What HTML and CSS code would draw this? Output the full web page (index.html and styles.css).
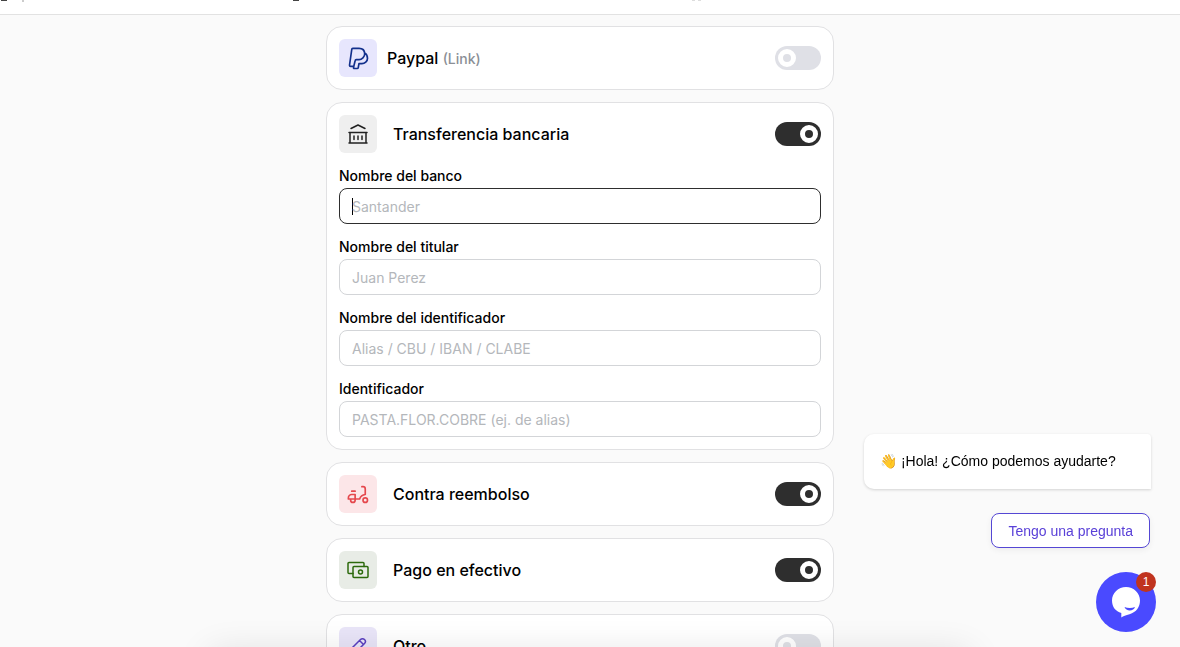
FILE: index.html
```html
<!DOCTYPE html>
<html lang="es">

<head>
  <meta charset="UTF-8">
  <meta name="viewport" content="width=device-width, initial-scale=1.0">
  <title>Métodos de pago</title>
  <link rel="stylesheet" href="styles.css">
</head>

<body>
  <header class="topbar">
    <span class="mark"></span>
    <span class="mark thin"></span>
    <span class="mark mid"></span>
    <span class="mark far"></span>
    <span class="mark far-end"></span>
  </header>

  <main class="methods">
    <section class="card">
      <div class="card-head">
        <span class="icon paypal">
          <svg width="27" height="27" viewBox="0 0 24 24">
            <path d="M10 13h2.500c2.500 0 5-2.500 5-5c0-3-1.900-5-5-5H7c-.5 0-1 .5-1 1L4 18c0 .5.5 1 1 1h2.800L9 14c.1-.6.4-1 1-1m7.500-5.800c1.700 1 2.500 2.800 2.500 4.800c0 2.500-2.500 4.500-5 4.500h-2.600l-.6 3.600a1 1 0 0 1-1 .8H8.100a.5.5 0 0 1-.5-.6l.2-1.400" />
          </svg>
        </span>
        <label class="name near" for="paypal">Paypal <small>(Link)</small></label>
        <input class="switch" type="checkbox" role="switch" id="paypal">
      </div>
    </section>

    <section class="card">
      <div class="card-head">
        <span class="icon bank">
          <svg width="22" height="22" viewBox="0 0 22 22">
            <path d="M4 5.500L11 2L18 5.500M2 9.500H20M2 20H20M3 9.500V20M19 9.500V20M7 13V16.500M11 13V16.500M15 13V16.500" />
          </svg>
        </span>
        <label class="name" for="transfer">Transferencia bancaria</label>
        <input class="switch" type="checkbox" role="switch" id="transfer" checked>
      </div>
      <div class="field">
        <label for="bank-name">Nombre del banco</label>
        <input type="text" id="bank-name" placeholder="Santander" autofocus>
      </div>
      <div class="field">
        <label for="holder">Nombre del titular</label>
        <input type="text" id="holder" placeholder="Juan Perez">
      </div>
      <div class="field">
        <label for="id-name">Nombre del identificador</label>
        <input type="text" id="id-name" placeholder="Alias / CBU / IBAN / CLABE">
      </div>
      <div class="field">
        <label for="id-value">Identificador</label>
        <input type="text" id="id-value" placeholder="PASTA.FLOR.COBRE (ej. de alias)">
      </div>
    </section>

    <section class="card">
      <div class="card-head">
        <span class="icon moped">
          <svg width="27" height="27" viewBox="0 0 24 24">
            <circle cx="18" cy="17" r="2" />
            <path d="M5 16v1a2 2 0 0 0 4 0v-5H6a3 3 0 0 0-3 3v1h10a6 6 0 0 1 5-4V7a2 2 0 0 0-2-2h-1M6 9h3" />
          </svg>
        </span>
        <label class="name" for="cod">Contra reembolso</label>
        <input class="switch" type="checkbox" role="switch" id="cod" checked>
      </div>
    </section>

    <section class="card">
      <div class="card-head">
        <span class="icon cash">
          <svg width="22" height="18" viewBox="0 0 22 18">
            <rect x="6" y="5.500" width="15" height="11" rx="1" />
            <path d="M17 5.500V2.500a1 1 0 0 0-1-1H2a1 1 0 0 0-1 1V11.500a1 1 0 0 0 1 1H6" />
            <circle cx="13.500" cy="11" r="2" />
          </svg>
        </span>
        <label class="name" for="cash">Pago en efectivo</label>
        <input class="switch" type="checkbox" role="switch" id="cash" checked>
      </div>
    </section>

    <section class="card">
      <div class="card-head">
        <span class="icon other">
          <svg width="24" height="24" viewBox="0 0 24 24">
            <path d="M4 20h4L18.500 9.500a2.800 2.800 0 1 0-4-4L4 16v4M13.500 6.500l4 4" />
          </svg>
        </span>
        <label class="name" for="other">Otro</label>
        <input class="switch" type="checkbox" role="switch" id="other">
      </div>
    </section>
  </main>

  <div class="bottom-bar"></div>

  <aside class="chat">
    <p class="bubble">👋 ¡Hola! ¿Cómo podemos ayudarte?</p>
    <button class="question" type="button">Tengo una pregunta</button>
    <button class="launcher" type="button" aria-label="Abrir chat">
      <svg width="28" height="32" viewBox="0 0 28 32">
        <path fill="#fff" d="M14 1C6.300 1 0 7 0 14.500c0 6.500 3.800 11 9.300 12.600V31.500c2-1.300 4.500-2 8.200-3.200C24.500 26 28 21 28 14.500C28 7 21.700 1 14 1z" />
        <path fill="#4a4aff" d="M12.500 21c3 1.200 7.500 1.200 10.500 0c-.6 2.200-2.800 3.600-5.200 3.600S13.200 23.200 12.500 21z" />
      </svg>
      <span class="badge">1</span>
    </button>
  </aside>
</body>

</html>
```
FILE: styles.css
```css
* {
  box-sizing: border-box;
}

html,
body {
  height: 100%;
  margin: 0;
}

body {
  overflow: hidden;
  background: #fafafa;
  color: #000;
  font-family: Inter, "Liberation Sans", sans-serif;
}

.topbar {
  display: flex;
  height: 15px;
  padding-left: 1px;
  background: #fff;
  border-bottom: 1px solid #e2e2e2;
}

.mark {
  width: 6px;
  height: 1px;
  background: #444;
}

.mark.thin {
  width: 2px;
  height: 2px;
  margin-left: 15px;
  background: #ccc;
}

.mark.mid {
  margin-left: 269px;
}

.mark.far {
  width: 3px;
  margin-left: 393px;
  background: #ddd;
}

.mark.far-end {
  width: 3px;
  margin-left: 3px;
  background: #ddd;
}

.methods {
  display: flex;
  flex-direction: column;
  gap: 12px;
  max-width: 528px;
  margin: 0 auto;
  padding: 11px 20px 12px 0;
}

.card {
  padding: 12px;
  background: #fff;
  border: 1px solid #e1e1e3;
  border-radius: 16px;
}

.card-head {
  display: flex;
  align-items: center;
}

.icon {
  display: flex;
  align-items: center;
  justify-content: center;
  width: 38px;
  height: 38px;
  border-radius: 6px;
}

.icon svg {
  fill: none;
  stroke: currentColor;
  stroke-width: 1.5;
  stroke-linecap: round;
  stroke-linejoin: round;
}

.icon.paypal {
  color: #12308c;
  background: #e7e6fd;
}

.icon.bank {
  color: #222;
  background: #efefef;
}

.icon.moped {
  color: #e5484d;
  background: #fce6e8;
}

.icon.cash {
  color: #2c6a0c;
  background: #e8ece6;
}

.icon.other {
  color: #5a3fc0;
  background: #e9e5f8;
}

.name {
  flex: 1;
  margin-left: 16px;
  font-size: 16px;
  font-weight: 500;
  line-height: 24px;
}

.name.near {
  margin-left: 10px;
}

.name small {
  color: #8b8f96;
  font-size: 14px;
}

.switch {
  appearance: none;
  display: flex;
  align-items: center;
  width: 46px;
  height: 24px;
  margin: 0;
  padding: 0 3px;
  border-radius: 12px;
  background: #dfe0e6;
  cursor: pointer;
}

.switch::before {
  content: "";
  box-sizing: border-box;
  width: 18px;
  height: 18px;
  border: 5px solid #fff;
  border-radius: 50%;
}

.switch:checked {
  justify-content: flex-end;
  background: #2e2e2e;
}

.field {
  display: flex;
  flex-direction: column;
  margin-top: 11px;
}

.field label {
  font-size: 14px;
  font-weight: 500;
  line-height: 24px;
}

.field input {
  width: 100%;
  height: 36px;
  padding: 0 12px;
  border: 1px solid #d3d5d8;
  border-radius: 8px;
  outline: none;
  background: #fff;
  font-family: inherit;
  font-size: 14px;
}

.field input::placeholder {
  color: #b4b7bb;
}

.field input:focus {
  border-color: #2e2e2e;
  background: linear-gradient(#000, #000) 12px 9px / 1px 17px no-repeat #fff;
  caret-color: transparent;
}

/* sits under the window edge, only its shadow shows */
.bottom-bar {
  position: fixed;
  right: 210px;
  bottom: -36px;
  left: 210px;
  height: 30px;
  box-shadow: 0 0 36px rgba(0, 0, 0, 0.12);
}

.chat {
  position: fixed;
  right: 24px;
  bottom: 15px;
  display: flex;
  flex-direction: column;
  align-items: flex-end;
  gap: 24px;
  font-family: "Liberation Sans", Arial, sans-serif;
}

.bubble {
  width: 287px;
  margin: 0 5px 0 0;
  padding: 18px 16px;
  border-radius: 10px 4px 0 10px;
  background: #fff;
  box-shadow: 0 1px 3px rgba(0, 0, 0, 0.16);
  font-size: 14px;
  line-height: 19px;
}

.question {
  height: 35px;
  margin-right: 6px;
  padding: 0 16px;
  border: 1px solid #5547d4;
  border-radius: 8px;
  background: #fff;
  box-shadow: 0 2px 6px rgba(0, 0, 0, 0.06);
  color: #5a41d8;
  font-family: inherit;
  font-size: 14px;
}

.launcher {
  position: relative;
  display: flex;
  align-items: center;
  justify-content: center;
  width: 60px;
  height: 60px;
  padding: 0;
  border: 0;
  border-radius: 50%;
  background: #4a4aff;
}

.badge {
  position: absolute;
  top: 0;
  right: 0;
  width: 20px;
  height: 20px;
  border-radius: 50%;
  background: #c0341f;
  color: #fff;
  font-family: inherit;
  font-size: 12px;
  line-height: 20px;
}
```
